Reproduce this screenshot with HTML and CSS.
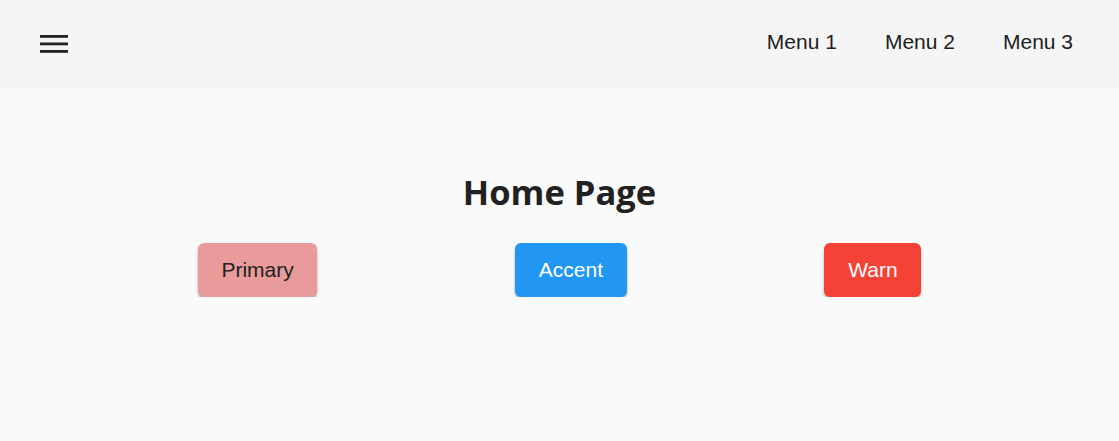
FILE: index.html
```html
<!DOCTYPE html>
<html lang="en">
<head>
<meta charset="utf-8">
<title>Home Page</title>
<link rel="stylesheet" href="styles.css">
</head>
<body>
<header class="toolbar">
  <button class="menu-toggle" aria-label="Menu">
    <svg width="28" height="18" viewBox="0 0 28 18" aria-hidden="true">
      <rect x="0" y="0" width="28" height="2.8" fill="#212121"/>
      <rect x="0" y="7.5" width="28" height="2.8" fill="#212121"/>
      <rect x="0" y="15" width="28" height="2.8" fill="#212121"/>
    </svg>
  </button>
  <nav class="nav">
    <a class="nav-link" href="#">Menu 1</a>
    <a class="nav-link" href="#">Menu 2</a>
    <a class="nav-link" href="#">Menu 3</a>
  </nav>
</header>
<main class="content">
  <h1 class="title">Home Page</h1>
  <div class="actions">
    <button class="btn btn-primary">Primary</button>
    <button class="btn btn-accent">Accent</button>
    <button class="btn btn-warn">Warn</button>
  </div>
</main>
</body>
</html>
```
FILE: styles.css
```css
html, body {
  margin: 0;
  padding: 0;
  background: #fafafa;
  font-family: "Liberation Sans", Arial, sans-serif;
  color: #212121;
}

.toolbar {
  height: 89px;
  background: #f5f5f5;
  display: flex;
  align-items: center;
  justify-content: space-between;
  padding: 0 22px 0 40px;
  box-sizing: border-box;
}

.menu-toggle {
  background: none;
  border: 0;
  padding: 0;
  margin: 0;
  display: flex;
  cursor: pointer;
  margin-top: -2px;
}

.nav {
  display: flex;
  align-items: center;
}

.nav-link {
  font-size: 21px;
  color: #212121;
  text-decoration: none;
  padding: 0 24px;
  margin-top: -6px;
}

.content {
  display: flex;
  flex-direction: column;
  align-items: center;
}

.title {
  font-family: "Open Sans", "Noto Sans", sans-serif;
  font-weight: 700;
  font-size: 34.5px;
  margin: 79px 0 0;
  line-height: 47px;
  color: #212121;
}

.actions {
  width: 100%;
  display: flex;
  justify-content: space-evenly;
  margin-top: 28px;
}

.btn {
  font-family: "Liberation Sans", Arial, sans-serif;
  font-size: 21px;
  height: 54px;
  padding: 0 23.75px;
  border: 0;
  border-radius: 6px;
  box-shadow: 0 3px 4px -1px rgba(0,0,0,0.3), 0 1px 2px rgba(0,0,0,0.14);
  cursor: pointer;
}

.btn-primary {
  background: #e99a9a;
  color: #212121;
}

.btn-accent {
  background: #2196f3;
  color: #ffffff;
}

.btn-warn {
  background: #f44336;
  color: #ffffff;
}
```
